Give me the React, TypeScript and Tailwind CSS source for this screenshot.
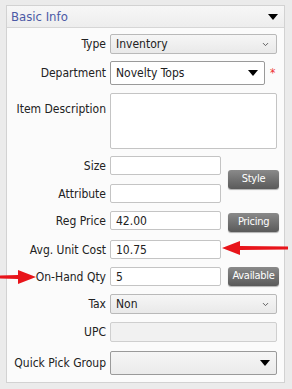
import { ChevronDown } from 'lucide-react';

const font = { fontFamily: '"DejaVu Sans Condensed", "Liberation Sans", Arial, sans-serif' };

function Label({ children, top = false }: { children: React.ReactNode; top?: boolean }) {
  return (
    <div className={`w-[103px] shrink-0 whitespace-nowrap pr-[4px] text-right text-[12px] text-[#222] ${top ? 'self-start pt-[7px]' : ''}`}>
      {children}
    </div>
  );
}

function Triangle() {
  return <div className="h-0 w-0 border-x-[5px] border-t-[6px] border-x-transparent border-t-black" />;
}

function GraySelect({ value }: { value: string }) {
  return (
    <div className="flex h-[20px] w-[167px] items-center justify-between rounded-[2px] border border-[#b9b9b9] bg-gradient-to-b from-[#f6f6f6] to-[#e9e9e9] pl-[5px] pr-[6px] text-[12px] text-[#222]">
      <span>{value}</span>
      <ChevronDown size={9} strokeWidth={2.5} className="text-[#555]" />
    </div>
  );
}

function Input({ value = '' }: { value?: string }) {
  return (
    <div className="flex h-[19px] w-[111px] items-center rounded-[2px] border border-[#c4c4c4] bg-white pl-[5px] text-[12px] text-[#222]">
      {value}
    </div>
  );
}

function DarkButton({ children, className = '' }: { children: React.ReactNode; className?: string }) {
  return (
    <div className={`ml-[7px] flex h-[19px] w-[51px] items-center justify-center rounded-[3px] bg-gradient-to-b from-[#8a8a8a] to-[#5a5a5a] text-[11px] tracking-[-0.3px] text-white shadow-[0_1px_1px_rgba(0,0,0,0.3)] ${className}`}>
      {children}
    </div>
  );
}

export default function App() {
  return (
    <div style={font} className="relative h-[389px] w-[292px] overflow-hidden bg-[#ebebeb] pl-[6px] pt-[5px]">
      <div className="h-[378px] w-[279px] border border-[#d2d2d2] bg-[#fbfbfb]">
        {/* header */}
        <div className="flex h-[22px] items-center justify-between border-b border-[#d6d6d6] bg-gradient-to-b from-[#f7f7f7] to-[#ededed] pl-[4px] pr-[6px]">
          <span className="text-[13px] text-[#4c5aa6]">Basic Info</span>
          <Triangle />
        </div>

        <div className="flex flex-col pt-[6px]">
          <div className="flex items-center">
            <Label>Type</Label>
            <GraySelect value="Inventory" />
          </div>

          <div className="mt-[7px] flex items-center">
            <Label>Department</Label>
            <div className="flex h-[24px] w-[155px] items-center justify-between rounded-[2px] border border-[#9a9a9a] bg-white pl-[5px] pr-[6px] text-[12px] text-[#222]">
              <span>Novelty Tops</span>
              <Triangle />
            </div>
            <span className="ml-[5px] text-[12px] text-[#e33]">*</span>
          </div>

          <div className="mt-[8px] flex">
            <Label top>Item Description</Label>
            <div className="h-[56px] w-[167px] rounded-[2px] border border-[#c4c4c4] bg-white" />
          </div>

          <div className="mt-[7px] flex items-center">
            <div className="flex flex-col gap-[9px]">
              <div className="flex items-center">
                <Label>Size</Label>
                <Input />
              </div>
              <div className="flex items-center">
                <Label>Attribute</Label>
                <Input />
              </div>
            </div>
            <DarkButton>Style</DarkButton>
          </div>

          <div className="mt-[8px] flex items-center">
            <Label>Reg Price</Label>
            <Input value="42.00" />
            <DarkButton className="translate-y-[2px]">Pricing</DarkButton>
          </div>

          <div className="mt-[10px] flex items-center">
            <Label>Avg. Unit Cost</Label>
            <Input value="10.75" />
          </div>

          <div className="mt-[8px] flex items-center">
            <Label>On-Hand Qty</Label>
            <Input value="5" />
            <DarkButton>Available</DarkButton>
          </div>

          <div className="mt-[8px] flex items-center">
            <Label>Tax</Label>
            <GraySelect value="Non" />
          </div>

          <div className="mt-[8px] flex items-center">
            <Label>UPC</Label>
            <div className="h-[20px] w-[167px] rounded-[2px] border border-[#cfcfcf] bg-[#f1f1f1]" />
          </div>

          <div className="mt-[9px] flex items-center">
            <Label>Quick Pick Group</Label>
            <div className="flex h-[24px] w-[167px] items-center justify-end rounded-[2px] border border-[#9a9a9a] bg-gradient-to-b from-[#f6f6f6] to-[#ebebeb] pr-[6px]">
              <Triangle />
            </div>
          </div>
        </div>
      </div>

      {/* red annotation arrows */}
      <svg className="absolute left-[222px] top-[240px]" width="66" height="16" viewBox="0 0 66 16">
        <path d="M0 8 L18 1 L18 6 L66 6.5 L66 9.5 L18 10 L18 15 Z" fill="#e8141a" />
      </svg>
      <svg className="absolute left-0 top-[269px]" width="36" height="16" viewBox="0 0 36 16">
        <path d="M36 8 L18 1 L18 6 L0 6.5 L0 9.5 L18 10 L18 15 Z" fill="#e8141a" />
      </svg>
    </div>
  );
}
